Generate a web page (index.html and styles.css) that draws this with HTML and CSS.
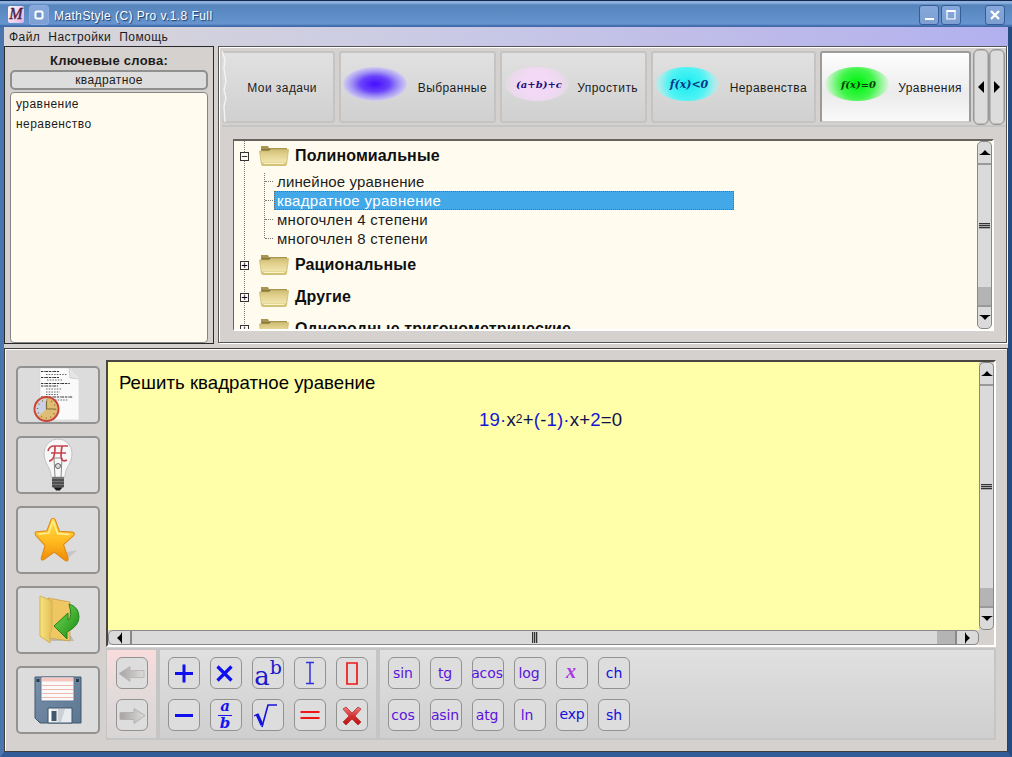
FILE: index.html
```html
<!DOCTYPE html>
<html lang="ru">
<head>
<meta charset="utf-8">
<title>MathStyle (C) Pro v.1.8 Full</title>
<link rel="stylesheet" href="styles.css">
</head>
<body>
<svg class="defs" width="0" height="0" aria-hidden="true">
  <defs>
    <linearGradient id="fold" x1="0" y1="0" x2="0" y2="1"><stop offset="0" stop-color="#cfbd74"/><stop offset=".3" stop-color="#e0d08c"/><stop offset=".75" stop-color="#efe3ab"/><stop offset="1" stop-color="#cdb963"/></linearGradient>
    <linearGradient id="gold" x1="0" y1="0" x2="0" y2="1"><stop offset="0" stop-color="#ffe04e"/><stop offset=".55" stop-color="#ffb91e"/><stop offset="1" stop-color="#f08a08"/></linearGradient>
    <linearGradient id="paper" x1="0" y1="0" x2="1" y2="0"><stop offset="0" stop-color="#f8e47e"/><stop offset="1" stop-color="#e3bd58"/></linearGradient>
    <linearGradient id="green" x1="0" y1="0" x2="1" y2="1"><stop offset="0" stop-color="#7fdc58"/><stop offset="1" stop-color="#118912"/></linearGradient>
    <linearGradient id="disk" x1="0" y1="0" x2="1" y2="1"><stop offset="0" stop-color="#7890aa"/><stop offset="1" stop-color="#5d7691"/></linearGradient>
    <linearGradient id="arrow" x1="0" y1="0" x2="1" y2="0"><stop offset="0" stop-color="#a6a2a2"/><stop offset="1" stop-color="#dcdada"/></linearGradient>
    <linearGradient id="redx" x1="0" y1="0" x2="0" y2="1"><stop offset="0" stop-color="#ec8080"/><stop offset=".5" stop-color="#d63030"/><stop offset="1" stop-color="#b81414"/></linearGradient>
    <symbol id="folder" viewBox="0 0 30 20"><path d="M2 0h7l1 2h18v15H2z" fill="#a89650"/><path d="M2.500 3h25v2.500h-25z" fill="#85753a"/><path d="M.5 5h9.500l2-1.500h17.500L27.500 18.500q-.2 1-1.500 1H4q-1.300 0-1.500-1z" fill="url(#fold)" stroke="#c9b96e" stroke-width=".8"/><path d="M5 17.500h20" stroke="#f9f2c8" stroke-width="1"/></symbol>
  </defs>
</svg>
<div class="window">
  <header class="titlebar">
    <span class="logo">M</span>
    <span class="wbtn pin"><svg width="18" height="18"><path d="M6.500 5.500h5l1 1v5l-1 1h-5l-1-1v-5z" fill="#6d92c8" stroke="#fff" stroke-width="2"/></svg></span>
    <h1 class="title">MathStyle (C) Pro v.1.8 Full</h1>
    <span class="wbtn"><svg width="18" height="18"><path d="M5 13h9" stroke="#fff" stroke-width="2"/></svg></span>
    <span class="wbtn max"><svg width="18" height="18"><path d="M5 5.500h8v7.500h-8z" fill="none" stroke="#fff" stroke-width="1.200"/><path d="M4.400 5h9.200" stroke="#fff" stroke-width="2"/></svg></span>
    <span class="wbtn close"><svg width="18" height="18"><path d="M5 5l8 8M13 5l-8 8" stroke="#fff" stroke-width="2.400"/></svg></span>
  </header>
  <nav class="menu"><span class="m1">Файл</span><span class="m2">Настройки</span><span class="m3">Помощь</span></nav>

  <div class="upper">
    <aside class="keywords">
      <h2>Ключевые слова:</h2>
      <button class="key">квадратное</button>
      <ul><li class="k1">уравнение</li><li class="k2">неравенство</li></ul>
    </aside>
    <section class="browse">
      <div class="tabs">
        <div class="tab t1"><svg class="torn" width="7" height="72"><path d="M0 0l3 8-1 9 2 14-2 8 2 8-2 8 1 16" fill="none" stroke="#f4f4f4" stroke-width="1.300"/></svg><span>Мои задачи</span></div>
        <div class="tab t2"><i class="blob violet"></i><span>Выбранные</span></div>
        <div class="tab t3"><i class="blob pink">(a+b)+c</i><span>Упростить</span></div>
        <div class="tab t4"><i class="blob cyan">f(x)&lt;0</i><span>Неравенства</span></div>
        <div class="tab t5 on"><i class="blob lime">f(x)=0</i><span>Уравнения</span></div>
        <div class="pager"><b><svg width="8" height="14"><path d="M7 1v12L1 7z"/></svg></b><b><svg width="8" height="14"><path d="M1 1v12l6-6z"/></svg></b></div>
      </div>
      <div class="tree">
        <div class="nodes">
          <div class="node first"><em>−</em><svg width="30" height="20"><use href="#folder"/></svg><strong>Полиномиальные</strong></div>
          <ul>
            <li class="c1"><span>линейное уравнение</span></li>
            <li class="c2 sel"><span>квадратное уравнение</span></li>
            <li class="c3"><span>многочлен 4 степени</span></li>
            <li class="c4"><span>многочлен 8 степени</span></li>
          </ul>
          <div class="node"><em>+</em><svg width="30" height="20"><use href="#folder"/></svg><strong>Рациональные</strong></div>
          <div class="node"><em>+</em><svg width="30" height="20"><use href="#folder"/></svg><strong>Другие</strong></div>
          <div class="node"><em>+</em><svg width="30" height="20"><use href="#folder"/></svg><strong>Однородные тригонометрические</strong></div>
        </div>
        <div class="vbar"><b><svg width="12" height="5"><path d="M0 5q3-1 6-5q3 4 6 5z"/></svg></b><div class="thumb"><i></i></div><div class="trough"></div><b><svg width="12" height="5"><path d="M0 0q3 1 6 5q3-4 6-5z"/></svg></b></div>
      </div>
    </section>
  </div>

  <main class="lower">
    <div class="side">
      <button class="s"><svg width="50" height="54" viewBox="0 0 50 54">
        <path d="M7 0h29l10 10v42H7z" fill="#fafafa" stroke="#d8d8d8" stroke-width=".7"/><path d="M36 0l1 10 9 1" fill="#e6e6e6" stroke="#bbb" stroke-width=".6"/>
        <g stroke="#333" stroke-width="1" stroke-dasharray="2 .7 1 .5 3 .8"><path d="M8 3.500h18M8 9.500h18M8 15.500h29M8 18h17M8 29h32"/></g><g stroke="#555" stroke-width=".9" stroke-dasharray="1.500 1.200"><path d="M13 6.500h21M14 12h16M13 21h15M13 24h14M13 26.500h12M22 32h13"/></g>
        <circle cx="13.500" cy="41" r="12" fill="#dfbd72" stroke="#c9453b" stroke-width="2"/><path d="M13.500 41V30.500A10.500 10.500 0 0 0 5.500 48z" fill="#c9d2e3"/><circle cx="13.500" cy="41" r="9" fill="none" stroke="#8b6642" stroke-width="1.600" stroke-dasharray=".8 3.900"/><path d="M13.500 33v8h9" stroke="#87693a" stroke-width="1.200" fill="none"/></svg></button>
      <button class="s"><svg width="32" height="54" viewBox="0 0 32 54">
        <path d="M9 39C9 28 2 27 2 15a14 14 0 0 1 28 0c0 12-7 13-7 24z" fill="#f7f7f8" stroke="#c2c2c4"/><path d="M13 39l-1-19h8l-1 19M13 27h6" fill="none" stroke="#8a8a8a"/><circle cx="16" cy="28" r="2.500" fill="#ddd" stroke="#666"/><path d="M6 13c1-4 3-5 6-5h14M13 8c0 11-2 15-6 15M20 8c-2 12-1 17 5 14M9 15h15" fill="none" stroke="#c7434d" stroke-width="1.700"/>
        <path d="M10 39h12v10l-3 2h-6l-3-2z" fill="#777"/><path d="M10 42h12M10 45h12M10 48h12" stroke="#2a2a2a"/><path d="M12 49.500h8l-2 3h-4z" fill="#181818"/></svg></button>
      <button class="s tall"><svg width="48" height="54" viewBox="0 0 52 54">
        <path d="M24 42l23-4-11 9z" fill="#aaa" opacity=".45"/><path d="M18.500 5q2-3 4.500 0l4.500 12.500 14 1q4 1 1 4L32 32l5 15q0 4-3.500 2L22 40 11 48q-4 2-3-2l4-13L2 22q-2-4 1-4l11-1z" fill="url(#gold)" stroke="#e08a16" stroke-width="1.200"/><path d="M20 7l-4 12.500-11 1M21 7l4.500 13 13 1" fill="none" stroke="#fff19a" stroke-width="1.500"/></svg></button>
      <button class="s tall"><svg width="44" height="52" viewBox="0 0 44 52">
        <path d="M14 47l24 0-3-5-18-4z" fill="#999" opacity=".5"/><path d="M12 4l22 4v39l-22-3z" fill="#eec662" stroke="#c79a3a" stroke-width=".7"/><path d="M4 2l12 5v28l-2 4v10L4 42z" fill="url(#paper)" stroke="#d4b24e"/><path d="M33 10q10 3 10 13 0 9-12 15v7L18 32l14-13v7q5-3 1-16z" fill="url(#green)" stroke="#23841f" stroke-width="1"/></svg></button>
      <button class="s tall"><svg width="48" height="50" viewBox="0 0 48 50">
        <path d="M1 2h46v46H6l-5-5z" fill="url(#disk)" stroke="#40566c"/><path d="M7 2h33v24H7z" fill="#fafafa" stroke="#5e768e"/><path d="M8 2.500h31v4H8z" fill="#f5c9c1"/><path d="M8 10.500h31M8 14.500h31M8 18.500h31M8 22.500h31" stroke="#f0b8ae"/><path d="M2.500 4h3v3h-3zM42 4h3v3h-3z" fill="#263b50"/><path d="M14 33h24v15H14z" fill="#e9ecee" stroke="#3f566e"/><path d="M15 34h2.500v13H15z" fill="#fff"/><path d="M17.500 36h5v10h-5z" fill="#41586d"/><path d="M24 34h7l-4 13h-3z" fill="#ccd0d4"/></svg></button>
    </div>
    <div class="work">
      <div class="sheet">
        <div class="paper"><p class="task">Решить квадратное уравение</p><p class="eq"><span>19·</span><u>x</u><sup>2</sup><u>+</u><span>(</span><u>-</u><span>1)·</span><u>x+</u><span>2</span><u>=0</u></p></div>
        <div class="vbar"><b><svg width="12" height="5"><path d="M0 5q3-1 6-5q3 4 6 5z"/></svg></b><div class="thumb"><i></i></div><div class="trough"></div><b><svg width="12" height="5"><path d="M0 0q3 1 6 5q3-4 6-5z"/></svg></b></div>
        <div class="hbar"><b><svg width="5" height="12"><path d="M5 0q-1 3-5 6q4 3 5 6z"/></svg></b><div class="thumb"><i></i></div><div class="trough"></div><b><svg width="5" height="12"><path d="M0 0q1 3 5 6q-4 3-5 6z"/></svg></b></div>
      </div>
      <div class="toolbar">
        <div class="group undo">
          <button><svg width="30" height="30"><path d="M2 15.500l11-7v4h14v7h-14v4z" fill="url(#arrow)" stroke="#bbb7b7"/></svg></button>
          <button><svg width="30" height="30"><path d="M28 15.500l-11-7v4h-14v7h14v4z" fill="url(#arrow)" stroke="#b5b1b1"/></svg></button>
        </div>
        <div class="group ops">
          <button><svg width="30" height="30"><path d="M6 15.500h18M15 6.500v18" stroke="#1010ee" stroke-width="3"/></svg></button>
          <button><svg width="30" height="30"><path d="M6.500 8.500l14 14M20.500 8.500l-14 14" stroke="#1010ee" stroke-width="3.200"/></svg></button>
          <button class="pow"><span>a</span><sup>b</sup></button>
          <button><svg width="30" height="30"><path d="M11 4.500h8M11 25.500h8M15 4.500v21" stroke="#3030dd" stroke-width="1.500"/></svg></button>
          <button><svg width="30" height="30"><path d="M10 5h10v21H10z" fill="none" stroke="#f01818" stroke-width="1.700"/></svg></button>
          <button><svg width="30" height="30"><path d="M6 15.500h18" stroke="#1010ee" stroke-width="3"/></svg></button>
          <button class="frac"><span>a</span><span>b</span></button>
          <button><svg width="30" height="30"><path d="M1 16l4-2" stroke="#1515dd" stroke-width="1.300"/><path d="M4 14l5 11" stroke="#1515dd" stroke-width="3.200"/><path d="M9 27l6-22h9" fill="none" stroke="#1515dd" stroke-width="1.600"/></svg></button>
          <button><svg width="30" height="30"><path d="M5.500 12h19M5.500 18h19" stroke="#f01515" stroke-width="2.200"/></svg></button>
          <button><svg width="30" height="30"><path d="M6 9l3-2 6 6 6-6 3 2-6 7 6 6-3 3-6-6-6 6-3-3 6-6z" fill="url(#redx)" stroke="#b53030" stroke-width=".8"/></svg></button>
        </div>
        <div class="group funcs">
          <button>sin</button><button>tg</button><button>acos</button><button>log</button><button class="var">x</button><button class="blue">ch</button>
          <button>cos</button><button>asin</button><button>atg</button><button class="ln">ln</button><button class="blue exp">exp</button><button class="blue">sh</button>
        </div>
      </div>
    </div>
  </main>
</div>
</body>
</html>
```
FILE: styles.css
```css
* { box-sizing: border-box; margin: 0; padding: 0; }
body { width: 1012px; height: 757px; overflow: hidden; background: #d5d1ce; font: 12px "Liberation Sans", Arial, sans-serif; color: #1c1c1c; }
.defs { position: absolute; }
svg { display: block; flex: none; }
ul { list-style: none; }
button { font: inherit; color: inherit; }
.window { width: 1012px; height: 757px; display: flex; flex-direction: column; border: solid; border-width: 0 4px 5px; border-color: #4a76b0 #254b83 #315c98 #4a76b0; border-radius: 5px 5px 0 0; background: #d5d1ce; }

.titlebar { height: 27px; margin: 0 -4px; flex: none; display: flex; align-items: center; padding: 2px 7px 0 8px; background: linear-gradient(#10284f 0 1px, #8eb0df 1px 3px, #5685bd 5px, #6594cf 24px, #3f69a9 26px); color: #fff; }
.logo { width: 16px; height: 17px; background: linear-gradient(120deg, #fff, #dfaee5); border-radius: 2px; font: italic 16px/16px "Liberation Serif", serif; color: #4b1c3c; text-align: center; -webkit-text-stroke: .4px #4b1c3c; }
.wbtn { width: 20px; height: 20px; border: 1px solid #355e98; border-radius: 3px; background: linear-gradient(#87a8db, #7d9fd2); }
.pin { margin-left: 5px; border-color: #89abe0; }
.max { margin-left: 2px; }
.close { margin-left: 24px; }
.title { flex: 1; margin-left: 5px; padding-top: 2px; font-size: 12px; font-weight: normal; letter-spacing: .43px; text-shadow: 1px 1px 1px #1a3767; }
.menu { height: 19px; flex: none; display: flex; gap: 8px; padding: 1px 0 0 5px; line-height: 19px; letter-spacing: .45px; background: linear-gradient(90deg, #d9d7d7, #c9c9e6 45%, #bdbae9 75%, #b2b1ef); }

.upper { height: 302px; flex: none; display: flex; align-items: flex-start; gap: 4px; }
.keywords { width: 210px; height: 298px; border: 1px solid #292929; padding: 6px 5px 0; text-align: center; }
.keywords h2 { font-size: 13px; line-height: 15px; height: 17px; letter-spacing: .26px; }
.key { display: block; width: 198px; height: 20px; line-height: 17px; border: 2px solid #909090; border-radius: 5px; background: #dddddd; letter-spacing: .4px; }
.keywords ul { height: 251px; margin-top: 2px; width: 198px; background: #fffcef; border: 1px solid #858585; border-radius: 4px; padding: 1px 5px; text-align: left; line-height: 20px; letter-spacing: .45px; }
.browse { width: 789px; height: 297px; flex: none; border: 1px solid #555; box-shadow: inset 1px 1px #fff, 1px 1px #fff; padding: 2px 0 0 3px; }

.tabs { height: 78px; display: flex; align-items: flex-start; padding-top: 2px; border-bottom: 2px solid #c5c5c5; letter-spacing: .43px; }
.tab { height: 72px; flex: none; margin-right: 4px; display: flex; align-items: center; justify-content: flex-end; border: 2px solid #c5c4c4; border-radius: 3px; background: linear-gradient(#e1e1e1, #d0d0d0); position: relative; }
.tab span { padding: 2px 7px 0 0; }
.tab.t1 { width: 113px; border-left: 0; } .t1 span { padding-right: 16px; }
.t2 { width: 157px; } .t3 { width: 147px; } .t4 { width: 165px; } .tab.t5 { width: 151px; margin-right: 2px; }
.torn { position: absolute; left: 0; top: -2px; }
.tab.on { border: 2px solid #9b9b9b; border-bottom-color: #ccc; background: linear-gradient(#fefefe, #ebebeb 60%, #fafafa); }
.blob { width: 64px; height: 34px; border-radius: 50%; margin: 0 auto 6px 2px; display: flex; align-items: center; justify-content: center; font: italic bold 10px "DejaVu Serif", serif; letter-spacing: 0; color: #140b82; }
.violet { background: radial-gradient(ellipse at center, #4b16ff 5%, #6a42fa 32%, #9d8df5 50%, #d3cff0 71%); }
.pink { background: radial-gradient(ellipse 34px 30px at center, #f3d9f5 40%, #ecd9ee 70%, #dcdbdc); color: #23107e; padding-left: 4px; }
.cyan { background: radial-gradient(ellipse 34px 30px at center, #24edf1 12%, #50f3f4 55%, #a9ecec 80%, #dcdcdc); color: #08378b; font-size: 11px; padding-left: 4px; }
.lime { background: radial-gradient(ellipse 34px 30px at center, #08f51a 12%, #42f54b 50%, #a9f5ab 78%, #f4f4f4); color: #0a3c0a; padding-left: 3px; }
.tab .lime, .tab .pink { margin-left: 3px; margin-right: -10px; }
.tab.t3, .tab.t5 { justify-content: space-between; }
.tab .cyan { margin-right: -10px; }
.tab.t4 { justify-content: space-between; }
.pager { display: flex; flex: none; margin-top: -2px; }
.pager b { width: 16px; height: 76px; border: 1px solid #999; box-shadow: inset 0 0 0 .5px #999; border-radius: 6px; background: #dcdcdc; display: flex; align-items: center; justify-content: center; }

.tree { width: 761px; height: 192px; margin: 12px 0 0 11px; display: flex; border: solid; border-width: 2px 2px 2px 1px; border-color: #67625e #fff #fff #67625e; background: #fffcef; overflow: hidden; }
.nodes { flex: 1; height: 188px; overflow: hidden; padding-left: 6px; background: repeating-linear-gradient(#777 0 1px, #fffcef 1px 2px) 10px 0 / 1px 188px no-repeat; }
.node { height: 32px; display: flex; align-items: center; font-size: 16px; letter-spacing: .13px; color: #101010; white-space: nowrap; }
.node svg { margin: 0 6px 0 3px; }
.node.first { height: 30px; }
.node em { width: 9px; height: 9px; border: 1px solid #333; background: #fffcef; font: normal 11px/7px "Liberation Sans", sans-serif; letter-spacing: 0; text-align: center; color: #000; }
.node em::after { content: none; }
.node em + svg { margin-left: 10px; }
.nodes ul { height: 78px; margin-left: 24px; padding-top: 1px; background: repeating-linear-gradient(#777 0 1px, #fffcef 1px 2px) 0 2px / 1px 66px no-repeat; }
.nodes li { height: 19px; display: flex; align-items: center; font-size: 15px; line-height: 19px; }
.nodes li::before { content: ""; width: 8px; margin: 0 1px 0 1px; border-top: 1px dotted #777; }
.nodes li span { padding-left: 3px; width: 460px; height: 19px; letter-spacing: .15px; }
.nodes li.sel span { background: #43a8e7; color: #fff; letter-spacing: .34px; outline: 1px dotted #806750; outline-offset: -1px; }
.nodes li.c3 span, .nodes li.c4 span { letter-spacing: .28px; }
.vbar { width: 15px; display: flex; flex-direction: column; border: 1.500px solid #888; border-radius: 5px; background: #dadada; overflow: hidden; }
.vbar b, .hbar b { flex: none; display: flex; align-items: center; justify-content: center; }
.vbar b { height: 21px; }
.vbar .thumb { flex: 1; border-top: 2px solid #999; display: flex; align-items: center; justify-content: center; }
.vbar i { width: 11px; height: 6px; background: repeating-linear-gradient(#333 0 1px, #aaa 1px 2px); }
.vbar .trough { height: 20px; background: #b4b4b4; border-bottom: 2px solid #999; }

.lower { height: 404px; display: flex; gap: 6px; border: 1px solid #3e3e3e; box-shadow: inset 1px 1px #fff; padding: 11px 0 0 11px; }
.side { width: 84px; flex: none; display: flex; flex-direction: column; gap: 12px; padding-top: 6px; }
.s { height: 58px; border: 2px solid #929292; border-radius: 5px; background: #dcdcdc; display: flex; align-items: center; justify-content: center; flex: none; }
.tall { height: 68px; }
.work { width: 890px; }
.sheet { width: 890px; height: 287px; display: grid; grid-template: 268px 15px / 871px 15px; border: solid; border-width: 2px; border-color: #494541 #fff #fff #494541; }
.paper { background: #ffffaa; padding: 10px 0 0 11px; color: #000; }
.task { font-size: 18.600px; line-height: 22px; letter-spacing: .04px; }
.eq { margin: 14px 0 0 360px; font-size: 18.600px; line-height: 24px; white-space: nowrap; color: #1616d8; letter-spacing: .17px; }
.eq u { color: #10104a; text-decoration: none; } .eq sup { font-size: 12px; line-height: 1; color: #10104a; vertical-align: 3px; }
.hbar { display: flex; border: 1.500px solid #888; border-radius: 5px; background: #dadada; overflow: hidden; }
.hbar b { width: 21px; }
.hbar .thumb { flex: 1; border-left: 2px solid #888; display: flex; align-items: center; justify-content: center; }
.hbar i { width: 6px; height: 11px; background: repeating-linear-gradient(90deg, #333 0 1px, #aaa 1px 2px); }
.hbar .trough { width: 20px; background: #b4b4b4; border-right: 2px solid #888; }

.toolbar { margin-top: 1px; width: 890px; height: 92px; display: flex; border: 2px solid #c5c5c5; border-left-width: 1px; background: linear-gradient(#e0e0e0, #cfcfcf); }
.group { display: grid; grid-auto-rows: 32px; gap: 10px; padding-top: 7px; align-content: start; }
.group button { width: 32px; height: 32px; border: 1px solid #929292; border-radius: 6px; background: #dddddd; display: flex; align-items: center; justify-content: center; }
.undo { width: 53px; padding-left: 9px; border-right: 4px solid #c5c5c5; background: linear-gradient(#f9dcdc, #e4dada 50%, #d8d5d5); }
.ops { width: 220px; grid-template-columns: repeat(5, 32px); padding-left: 8px; border-right: 4px solid #c5c5c5; }
.funcs { grid-template-columns: repeat(6, 32px); padding-left: 8px; font: 14px "DejaVu Sans", sans-serif; color: #5a14dd; }
.group.funcs button { padding: 0 2px 1px 0; letter-spacing: -.1px; }
.group.funcs .blue { color: #1010dd; padding: 0; }
.group.funcs .exp { padding-bottom: 2px; }
.group.funcs .ln { padding-right: 6px; }
.group.funcs .var { font: italic bold 20px "Liberation Serif", serif; color: #aa39e5; padding-bottom: 4px; }
.pow { font: 26px/30px "DejaVu Serif", serif; color: #1818cc; }
.pow span { padding-top: 5px; }
.pow sup { font-size: 19px; line-height: 1; align-self: flex-start; }
.group .frac { flex-direction: column; color: #1515ee; font: italic bold 15px/12px "DejaVu Serif", serif; padding: 0 2px 0 0; }
.frac span:first-child { border-bottom: 1px solid #1515ee; padding: 0 2px; height: 14px; line-height: 9px; }
.frac span:last-child { height: 13px; line-height: 14px; }
```
